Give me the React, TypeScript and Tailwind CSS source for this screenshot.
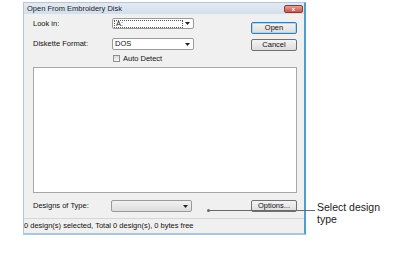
const ui = { fontFamily: '"Liberation Sans", Arial, sans-serif' }

function Combo({ value, focus = false, flat = false }: { value?: string; focus?: boolean; flat?: boolean }) {
  return (
    <div
      className={`flex items-center h-full w-full rounded-[2px] border border-[#9a9a9a] pl-[1px] pr-[3px] ${
        flat ? 'bg-gradient-to-b from-[#f2f2f2] to-[#dcdcdc] border-[#8a8a8a]' : 'bg-white'
      }`}
    >
      <div className={`flex-1 h-[8px] flex items-center leading-none ${focus ? 'border border-dotted border-[#555]' : ''}`}>
        <span className="text-[7.5px] text-[#111] pl-[1px]">{value}</span>
      </div>
      <svg width="5" height="3" viewBox="0 0 5 3" className="ml-[2px]">
        <path d="M0 0h5L2.5 3z" fill="#222" />
      </svg>
    </div>
  )
}

function Button({ label, primary = false }: { label: string; primary?: boolean }) {
  return (
    <div
      className={`h-[12px] w-[46px] flex items-center justify-center rounded-[2px] border bg-gradient-to-b from-[#f4f4f4] to-[#dddddd] text-[7.5px] leading-none text-[#111] ${
        primary ? 'border-[#3d7bad] shadow-[inset_0_0_0_1px_#a9d6f5]' : 'border-[#707070]'
      }`}
    >
      {label}
    </div>
  )
}

export default function App() {
  return (
    <div className="relative w-[403px] h-[255px] bg-white pl-[23px] pt-[2px]" style={ui}>
      {/* Dialog */}
      <div className="w-[283px] h-[233px] flex flex-col border border-[#b7c6d6] border-r-[2px] border-r-[#4d9fd3] border-b-[2px] border-b-[#a9c7e3]">
        {/* Title bar */}
        <div className="h-[11px] flex items-center justify-between pl-[3px] pr-[1px] bg-gradient-to-b from-[#e2eaf3] to-[#d3dfec]">
          <span className="text-[7.5px] leading-none text-[#1a1a1a]">Open From Embroidery Disk</span>
          <div className="w-[19px] h-[8px] rounded-[2px] border border-[#8a3a30] bg-gradient-to-b from-[#e8a293] to-[#c45a45] flex items-center justify-center">
            <span className="text-[6px] leading-none text-white font-bold">x</span>
          </div>
        </div>

        {/* Body */}
        <div className="flex-1 flex flex-col bg-[#f0f0f0] pl-[9px] pr-[7px]">
          <div className="flex h-[53px]">
            <div className="flex flex-col pt-[4px] w-[184px]">
              <div className="flex items-center h-[11px]">
                <span className="w-[79px] text-[7.5px] text-[#111] leading-none">Look in:</span>
                <div className="w-[82px] h-[11px]">
                  <Combo value="A:" focus />
                </div>
              </div>
              <div className="flex items-center h-[12px] mt-[9px]">
                <span className="w-[79px] text-[7.5px] text-[#111] leading-none">Diskette Format:</span>
                <div className="w-[82px] h-[12px]">
                  <Combo value="DOS" />
                </div>
              </div>
              <div className="flex items-center mt-[5px] pl-[80px] h-[7px]">
                <div className="w-[7px] h-[7px] border border-[#8e8f8f] bg-gradient-to-b from-[#dcdcdc] to-[#f6f6f6]" />
                <span className="ml-[3px] text-[7.5px] text-[#111] leading-none">Auto Detect</span>
              </div>
            </div>
            <div className="flex flex-col pt-[8px] gap-[5px] ml-[34px]">
              <Button label="Open" primary />
              <Button label="Cancel" />
            </div>
          </div>

          {/* List */}
          <div className="w-[264px] h-[126px] bg-white border border-[#a7a7a7]" />

          {/* Designs row */}
          <div className="flex items-center mt-[7px] h-[12px]">
            <span className="w-[78px] text-[7.5px] text-[#111] leading-none">Designs of Type:</span>
            <div className="w-[82px] h-[12px]">
              <Combo flat />
            </div>
            <div className="ml-[59px]">
              <Button label="Options..." />
            </div>
          </div>
        </div>

        {/* Status bar */}
        <div className="h-[15px] flex items-center bg-[#f0f0f0] border-t border-[#d6d6d6]">
          <span className="text-[7.5px] text-[#111] leading-none">0 design(s) selected, Total 0 design(s), 0 bytes free</span>
        </div>
      </div>

      {/* Callout */}
      <div className="absolute left-[207px] top-[209px] w-[3px] h-[3px] rounded-full bg-[#666]" />
      <div className="absolute left-[209px] top-[210px] w-[106px] h-[1px] bg-[#6a6a6a]" />
      <div className="absolute left-[317px] top-[201px] text-[10.5px] leading-[12px] text-[#1a1a1a]">
        Select design
        <br />
        type
      </div>
    </div>
  )
}
